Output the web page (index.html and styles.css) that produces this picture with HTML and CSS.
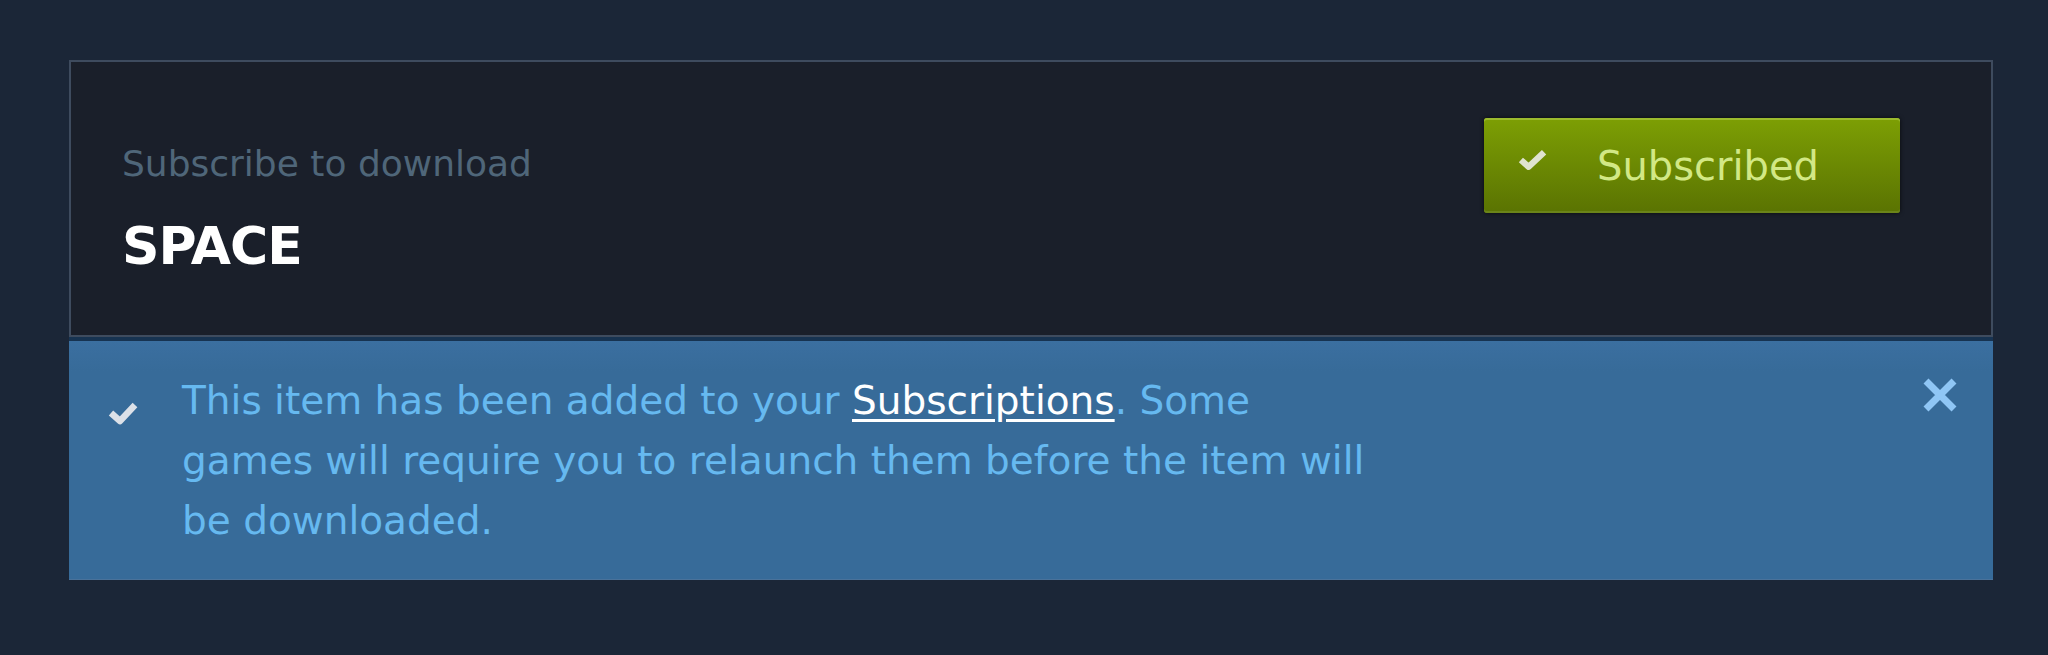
FILE: index.html
```html
<!DOCTYPE html>
<html lang="en">
  <head>
    <meta charset="UTF-8">
    <meta name="viewport" content="width=device-width, initial-scale=1">
    <title>Subscribe to download - SPACE</title>
    <link rel="stylesheet" href="styles.css">
  </head>
  <body>

<div class="workshop">
  <div class="item-box">
    <div class="item-info">
      <div class="item-sub">Subscribe to download</div>
      <div class="item-title">SPACE</div>
    </div>
    <a class="btn-subscribed" href="#">
      <svg class="btn-check" viewBox="0 0 30 22"><polyline points="3,11 11,18 27,3"/></svg>
      <span>Subscribed</span>
    </a>
  </div>

  <div class="notice">
    <svg class="notice-check" viewBox="0 0 30 23"><polyline points="3,11 12,19 27,3"/></svg>
    <p class="notice-text">This item has been added to your <a href="#">Subscriptions</a>. Some games will require you to relaunch them before the item will be downloaded.</p>
    <svg class="notice-close" viewBox="0 0 36 36"><path d="M4 4 L32 32 M32 4 L4 32"/></svg>
  </div>
</div>

  </body>
</html>
```

FILE: styles.css
```css
*, ::before, ::after { box-sizing: border-box; }
html { font-family: "DejaVu Sans", sans-serif; }

body {
  margin: 0;
  background: #1b2637;
}

.workshop {
  width: 1924px;
  margin: 60px 0 0 69px;
}

/* item header */
.item-box {
  display: flex;
  justify-content: space-between;
  align-items: flex-start;
  height: 277px;
  padding: 56px 91px 0 51px;
  border: 2px solid #3e4b5e;
  background: #1a1f2a;
}
.item-info {
  padding-top: 24px;
}
.item-sub {
  font-size: 36px;
  line-height: 44px;
  color: #4f6679;
}
.item-title {
  margin-top: 30px;
  font-size: 52px;
  font-weight: 700;
  line-height: 60px;
  letter-spacing: -1px;
  color: #fff;
}

.btn-subscribed {
  display: flex;
  align-items: center;
  width: 416px;
  height: 95px;
  padding-left: 34px;
  border-radius: 3px;
  background: linear-gradient(to bottom, #7d9f04, #5a7302);
  box-shadow: inset 0 2px 0 #9cbb2e, inset 0 -2px 0 #6b8419, 0 0 4px rgba(0, 0, 0, .7);
  color: #d2e885;
  font-size: 40px;
  text-decoration: none;
}
.btn-check {
  width: 29px;
  height: 22px;
  margin: -12px 50px 0 0;
  fill: none;
  stroke: #dfe3d0;
  stroke-width: 6.5;
  stroke-linejoin: round;
}

/* added to subscriptions notice */
.notice {
  display: flex;
  align-items: flex-start;
  padding: 30px 35px 28px 39px;
  border-top: 4px solid #173351;
  border-bottom: 1px solid #4a729a;
  background: linear-gradient(to bottom, #3b6fa0, #376b99 30px);
}
.notice-check {
  width: 30px;
  height: 23px;
  margin: 31px 44px 0 0;
  fill: none;
  stroke: #dce1e8;
  stroke-width: 6.5;
  stroke-linejoin: round;
}
.notice-text {
  max-width: 1195px;
  margin: 0;
  font-size: 39px;
  line-height: 60px;
  color: #66b9f0;
}
.notice-text a {
  color: #fff;
  text-decoration: underline;
  text-underline-offset: 5px;
}
.notice-close {
  width: 36px;
  height: 36px;
  margin: 6px 0 0 auto;
  fill: none;
  stroke: #8fc6f5;
  stroke-width: 7;
}
```
